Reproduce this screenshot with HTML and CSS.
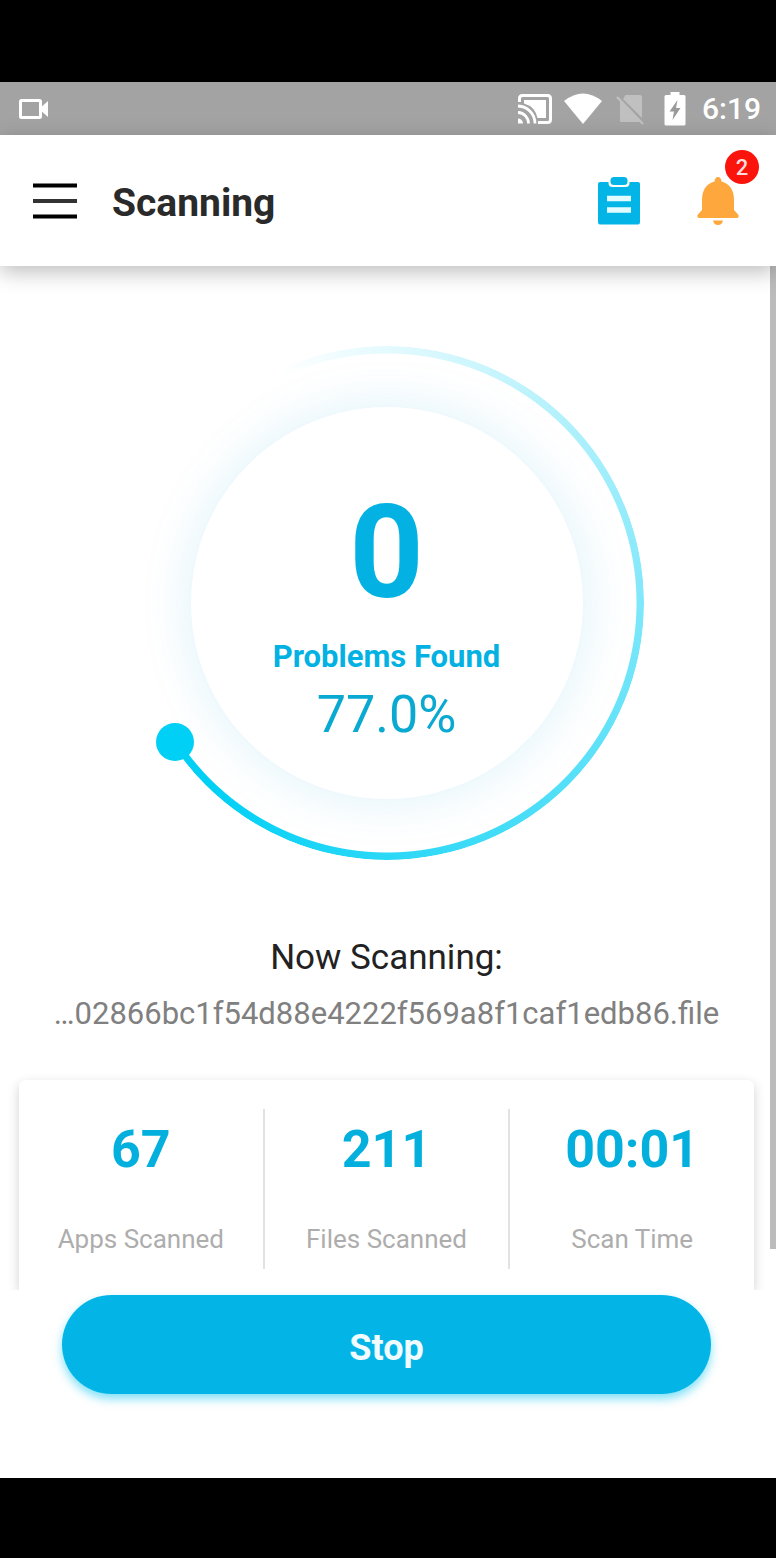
FILE: index.html
```html
<!DOCTYPE html>
<html lang="en">
<head>
    <meta charset="UTF-8">
    <meta name="viewport" content="width=device-width, initial-scale=1.0">
    <title>Scanning</title>
    <link rel="stylesheet" href="styles.css">
</head>
<body>
    <div class="screen">
        <div class="status-bar">
            <svg class="cam-icon" width="30" height="20" viewBox="0 0 30 20" aria-hidden="true">
                <rect x="1.5" y="1.5" width="20" height="17" rx="1" fill="none" stroke="#fff" stroke-width="3"/>
                <path d="M20 10l9-8v16z" fill="#fff"/>
            </svg>
            <div class="status-icons">
                <svg class="cast-icon" width="34" height="30" viewBox="0 0 34 30" aria-hidden="true">
                    <path d="M1.5 8V4.500Q1.500 1.500 4.500 1.500H29.500Q32.500 1.500 32.500 4.500V25.500Q32.500 28.500 29.500 28.500H20" fill="none" stroke="#fff" stroke-width="3"/>
                    <path d="M6 6H28V24H19.500A19 19 0 0 0 6 9.500Z" fill="#fff"/>
                    <path d="M0 12A17.500 17.500 0 0 1 17 29.500M0 18.500A11 11 0 0 1 10.500 29.500" fill="none" stroke="#fff" stroke-width="2.800"/>
                    <path d="M0 24.500A5 5 0 0 1 5 29.500H0z" fill="#fff"/>
                </svg>
                <svg class="wifi-icon" width="38" height="31" viewBox="0 0 38 31" aria-hidden="true">
                    <path d="M0 8Q19-7 38 8L19 31z" fill="#fff"/>
                </svg>
                <svg class="sim-icon" width="28" height="32" viewBox="0 0 28 32" aria-hidden="true">
                    <path d="M9.500 2H24Q26 2 26 4V25L7 6zM4 8L24 29H5Q4 29 4 28z" fill="#c0c0c0"/>
                    <path d="M1 4L27 31" stroke="#c0c0c0" stroke-width="2.500"/>
                </svg>
                <svg class="battery-icon" width="22" height="34" viewBox="0 0 22 34" aria-hidden="true">
                    <path d="M6.500 0H15.500V3H20Q21.500 3 21.500 4.500V32Q21.500 33.500 20 33.500H2Q.5 33.500.5 32V4.500Q.5 3 2 3H6.500z" fill="#fff"/>
                    <path d="M13.500 8L5.500 19.500H10L8.500 28L16.500 16H12z" fill="#9a9a9a"/>
                </svg>
                <span class="clock">6:19</span>
            </div>
        </div>

        <header class="app-bar">
            <button class="icon-button" type="button" aria-label="Menu">
                <svg width="44" height="36" viewBox="0 0 44 36">
                    <path d="M0 2.500H44M0 33.500H44" stroke="#000" stroke-width="4"/>
                    <path d="M0 18H44" stroke="#333" stroke-width="4"/>
                </svg>
            </button>
            <h1>Scanning</h1>
            <button class="icon-button report-button" type="button" aria-label="Reports">
                <svg width="42" height="49" viewBox="0 0 42 49">
                    <path d="M2 6H10.500V7Q10.500 11 14.500 11H27.500Q31.500 11 31.500 7V6H40Q42 6 42 8V46Q42 48.500 40 48.500H2Q0 48.500 0 46V8Q0 6 2 6z" fill="#03b5e6"/>
                    <rect x="12.500" y="1" width="17" height="8" rx="3.500" fill="#03b5e6"/>
                    <path d="M9 22.500H33M9 34H33" stroke="#e2fbff" stroke-width="5.500" stroke-linecap="butt"/>
                </svg>
            </button>
            <button class="icon-button bell-button" type="button" aria-label="Notifications">
                <svg width="42" height="48" viewBox="0 0 42 48">
                    <path d="M21 0Q24 0 24.500 4.500Q37 8 37 23V33L41.500 38Q42 41 40 41H2Q0 41 .5 38L5 33V23Q5 8 17.500 4.500Q18 0 21 0z" fill="#fda73c"/>
                    <path d="M16 43.500H26Q25 48 21 48Q17 48 16 43.500z" fill="#fda73c"/>
                </svg>
                <span class="badge">2</span>
            </button>
        </header>

        <main class="content">
            <section class="gauge">
                <div class="gauge-arc"></div>
                <svg class="gauge-dot" viewBox="0 0 514 514" aria-hidden="true">
                    <circle cx="45" cy="396" r="19" fill="#00d0f5"/>
                </svg>
                <div class="gauge-inner">
                    <div class="problem-count">0</div>
                    <div class="problem-label">Problems Found</div>
                    <div class="percent">77.0%</div>
                </div>
            </section>

            <h2 class="now-scanning">Now Scanning:</h2>
            <p class="file-name">…02866bc1f54d88e4222f569a8f1caf1edb86.file</p>

            <section class="stats">
                <div class="stat">
                    <div class="stat-value">67</div>
                    <div class="stat-label">Apps Scanned</div>
                </div>
                <div class="stat">
                    <div class="stat-value">211</div>
                    <div class="stat-label">Files Scanned</div>
                </div>
                <div class="stat">
                    <div class="stat-value">00:01</div>
                    <div class="stat-label">Scan Time</div>
                </div>
            </section>
            <div class="scroll-thumb"></div>
        </main>

        <footer class="actions">
            <button class="stop-button" type="button">Stop</button>
        </footer>
    </div>
</body>
</html>
```
FILE: styles.css
```css
* {
    box-sizing: border-box;
}
body {
    font-family: Roboto, "Liberation Sans", sans-serif;
    display: flex;
    flex-direction: column;
    min-height: 100vh;
    margin: 0;
    padding: 82px 0 80px;
    background-color: #000;
}
h1, h2, p {
    margin: 0;
}
button {
    font-family: inherit;
    border: none;
    cursor: pointer;
}
.screen {
    flex: 1;
    display: flex;
    flex-direction: column;
    background-color: #fff;
}

/* status bar */
.status-bar {
    display: flex;
    justify-content: space-between;
    align-items: center;
    height: 53px;
    padding: 0 15px 0 19px;
    background-color: #a3a3a3;
}
.status-icons {
    display: flex;
    align-items: center;
}
.wifi-icon {
    margin-left: 12px;
}
.sim-icon {
    margin-left: 14px;
}
.battery-icon {
    margin-left: 20px;
}
.clock {
    margin-left: 16px;
    font-size: 30px;
    font-weight: 500;
    color: #fff;
}

/* app bar */
.app-bar {
    position: relative;
    z-index: 1;
    display: flex;
    align-items: center;
    height: 131px;
    padding: 0 37px 0 33px;
    background-color: #fff;
    box-shadow: 0 6px 20px rgba(0, 0, 0, 0.26);
}
.app-bar h1 {
    flex: 1;
    margin-left: 35px;
    padding-top: 4px;
    font-size: 39px;
    line-height: 46px;
    font-weight: 700;
    color: #2a2a2a;
}
.icon-button {
    position: relative;
    display: flex;
    padding: 0;
    background: none;
}
.bell-button {
    margin-left: 57px;
}
.badge {
    position: absolute;
    top: -27px;
    right: -20px;
    width: 34px;
    height: 34px;
    border-radius: 50%;
    font-size: 22px;
    line-height: 36px;
    font-weight: 500;
    color: #ffdcdc;
    background-color: #fb140c;
}

/* scan content */
.content {
    position: relative;
    flex: 1;
    display: flex;
    flex-direction: column;
    padding: 80px 22px 0 19px;
    overflow: hidden;
    text-align: center;
}
.gauge {
    position: relative;
    display: flex;
    justify-content: center;
    align-items: center;
    width: 514px;
    height: 514px;
    margin: 0 auto;
}
.gauge-arc {
    position: absolute;
    inset: 0;
    border-radius: 50%;
    background: conic-gradient(from 335deg, rgba(0, 208, 245, 0) 0deg, rgba(0, 208, 245, 0.5) 115deg, #00d0f5 250deg, #00d0f5 262deg, transparent 262deg);
    -webkit-mask: radial-gradient(closest-side, transparent 249px, #000 250px);
    mask: radial-gradient(closest-side, transparent 249px, #000 250px);
}
.gauge-dot {
    position: absolute;
    inset: 0;
}
.gauge-inner {
    width: 392px;
    height: 392px;
    padding-top: 78px;
    border-radius: 50%;
    color: #03b2e2;
    background-color: #fff;
    box-shadow: 0 0 50px 2px rgba(3, 165, 220, 0.13);
}
.problem-count {
    font-size: 130px;
    line-height: 136px;
    font-weight: 700;
}
.problem-label {
    margin-top: 18px;
    font-size: 31px;
    line-height: 36px;
    font-weight: 700;
}
.percent {
    margin-top: 10px;
    font-size: 52px;
    line-height: 60px;
    font-weight: 400;
    color: #0aa9d2;
}
.now-scanning {
    margin-top: 77px;
    font-size: 35px;
    line-height: 42px;
    font-weight: 400;
    color: #222;
}
.file-name {
    margin-top: 17px;
    font-size: 31px;
    line-height: 36px;
    color: #808080;
}

/* counters card */
.stats {
    display: flex;
    flex: 1;
    align-items: flex-start;
    margin-top: 48px;
    padding: 29px 0 20px;
    border-radius: 6px 6px 0 0;
    background-color: #fff;
    box-shadow: 0 4px 12px rgba(0, 0, 0, 0.18);
}
.stat {
    flex: 1;
    padding: 10px 0 14px;
}
.stat + .stat {
    border-left: 2px solid #e2e2e2;
}
.stat-value {
    font-size: 52px;
    line-height: 62px;
    font-weight: 700;
    color: #03b0dd;
}
.stat-label {
    margin-top: 42px;
    font-size: 26px;
    line-height: 32px;
    color: #adadad;
}
.scroll-thumb {
    position: absolute;
    top: 0;
    right: 0;
    width: 6px;
    height: 96%;
    background-color: #bbb;
}

/* bottom action */
.actions {
    padding: 5px 65px 84px 62px;
}
.stop-button {
    display: block;
    width: 100%;
    height: 99px;
    padding: 6px 0 0;
    border-radius: 50px;
    font-size: 36px;
    line-height: 42px;
    font-weight: 700;
    color: #f0fcff;
    background-color: #03b5e7;
    box-shadow: 0 5px 10px rgba(3, 195, 240, 0.5);
}
```
